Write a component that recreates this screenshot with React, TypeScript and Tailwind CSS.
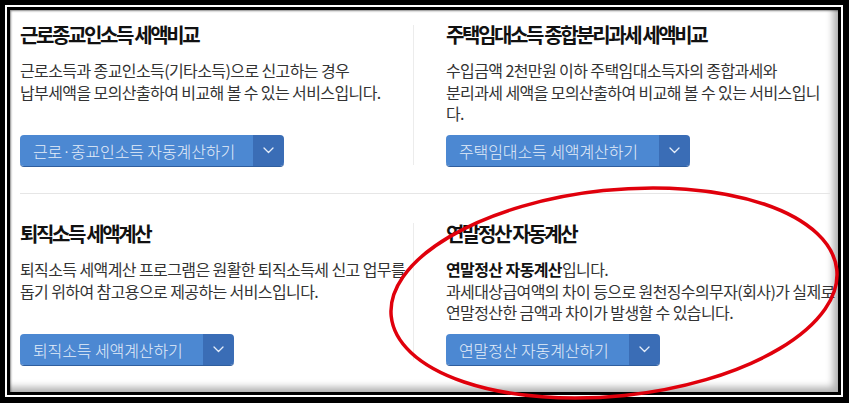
import React from "react";

type Item = {
  title: string;
  lines: React.ReactNode[];
  button: string;
  mainWidth: string;
};

const Chevron = () => (
  <svg width="11" height="7" viewBox="0 0 11 7" fill="none">
    <path d="M1 1l4.5 4.5L10 1" stroke="#e6eefa" strokeWidth="1.3" strokeLinecap="round" strokeLinejoin="round" />
  </svg>
);

const CalcButton: React.FC<{ label: string; mainWidth: string }> = ({ label, mainWidth }) => {
  return (
    <div className="flex h-[31px] rounded-[4px] overflow-hidden shadow-[0_1px_0_#2f5e9e] w-fit">
      <div className={`${mainWidth} bg-[#4c88d2] flex items-center pl-[13px] text-[16px] tracking-[-0.1px] font-light text-[#e4edf9] whitespace-nowrap`}>
        {label}
      </div>
      <div className="w-[31px] bg-[#3a6db6] flex items-center justify-center">
        <Chevron />
      </div>
    </div>
  );
};

const Cell: React.FC<{ item: Item; className?: string }> = ({ item, className }) => {
  return (
    <div className={`flex flex-col ${className ?? ""}`}>
      <h2 className="text-[20px] leading-[26px] font-bold tracking-[-2.4px] text-[#111] whitespace-nowrap">
        {item.title}
      </h2>
      <div className="mt-[12px] text-[16px] leading-[21.5px] tracking-[-0.6px] text-[#333]">
        {item.lines.map((l, i) => (
          <p key={i} className="whitespace-nowrap">{l}</p>
        ))}
      </div>
      <div className="mt-auto">
        <CalcButton label={item.button} mainWidth={item.mainWidth} />
      </div>
    </div>
  );
};

const items: Item[] = [
  {
    title: "근로종교인소득 세액비교",
    lines: ["근로소득과 종교인소득(기타소득)으로 신고하는 경우", "납부세액을 모의산출하여 비교해 볼 수 있는 서비스입니다."],
    button: "근로·종교인소득 자동계산하기",
    mainWidth: "w-[233px]",
  },
  {
    title: "주택임대소득 종합분리과세 세액비교",
    lines: [
      "수입금액 2천만원 이하 주택임대소득자의 종합과세와",
      "분리과세 세액을 모의산출하여 비교해 볼 수 있는 서비스입니",
      "다.",
    ],
    button: "주택임대소득 세액계산하기",
    mainWidth: "w-[213px]",
  },
  {
    title: "퇴직소득 세액계산",
    lines: ["퇴직소득 세액계산 프로그램은 원활한 퇴직소득세 신고 업무를", "돕기 위하여 참고용으로 제공하는 서비스입니다."],
    button: "퇴직소득 세액계산하기",
    mainWidth: "w-[183px]",
  },
  {
    title: "연말정산 자동계산",
    lines: [
      <>
        <b className="font-bold text-[#111]">연말정산 자동계산</b>입니다.
      </>,
      "과세대상급여액의 차이 등으로 원천징수의무자(회사)가 실제로",
      "연말정산한 금액과 차이가 발생할 수 있습니다.",
    ],
    button: "연말정산 자동계산하기",
    mainWidth: "w-[183px]",
  },
];

export default function App() {
  return (
    <div className="relative w-[849px] h-[403px] bg-black pt-[5px] pl-[5px] pr-[6px] pb-[6px] font-['Noto_Sans_CJK_KR','Noto_Sans',sans-serif]">
      <div className="h-full border-2 border-white bg-black p-[3px]">
        <div className="h-full bg-white flex flex-col shadow-[inset_-5px_-5px_7px_rgba(0,0,0,0.3),inset_1px_1px_2px_rgba(0,0,0,0.45)]">
          {/* top row */}
          <div className="flex h-[183px]">
            <Cell item={items[0]} className="w-[393px] ml-[10px] pt-[12px] pb-[27px]" />
            <div className="w-px bg-[#ececec] mt-[15px] mb-[28px]" />
            <Cell item={items[1]} className="flex-1 pl-[32px] pt-[12px] pb-[27px]" />
          </div>
          <div className="h-px bg-[#e6e6e6] ml-[10px] mr-[8px]" />
          {/* bottom row */}
          <div className="flex flex-1">
            <Cell item={items[2]} className="w-[393px] ml-[10px] pt-[27px] pb-[27px]" />
            <div className="w-px bg-[#ececec] mt-[29px] mb-[32px]" />
            <Cell item={items[3]} className="flex-1 pl-[32px] pt-[27px] pb-[27px]" />
          </div>
        </div>
      </div>
      <svg className="absolute inset-0 pointer-events-none" width="849" height="403" viewBox="0 0 849 403">
        <ellipse
          cx="614"
          cy="293"
          rx="224"
          ry="103"
          transform="rotate(-6 614 293)"
          fill="none"
          stroke="#e0000c"
          strokeWidth="3.5"
        />
      </svg>
    </div>
  );
}
